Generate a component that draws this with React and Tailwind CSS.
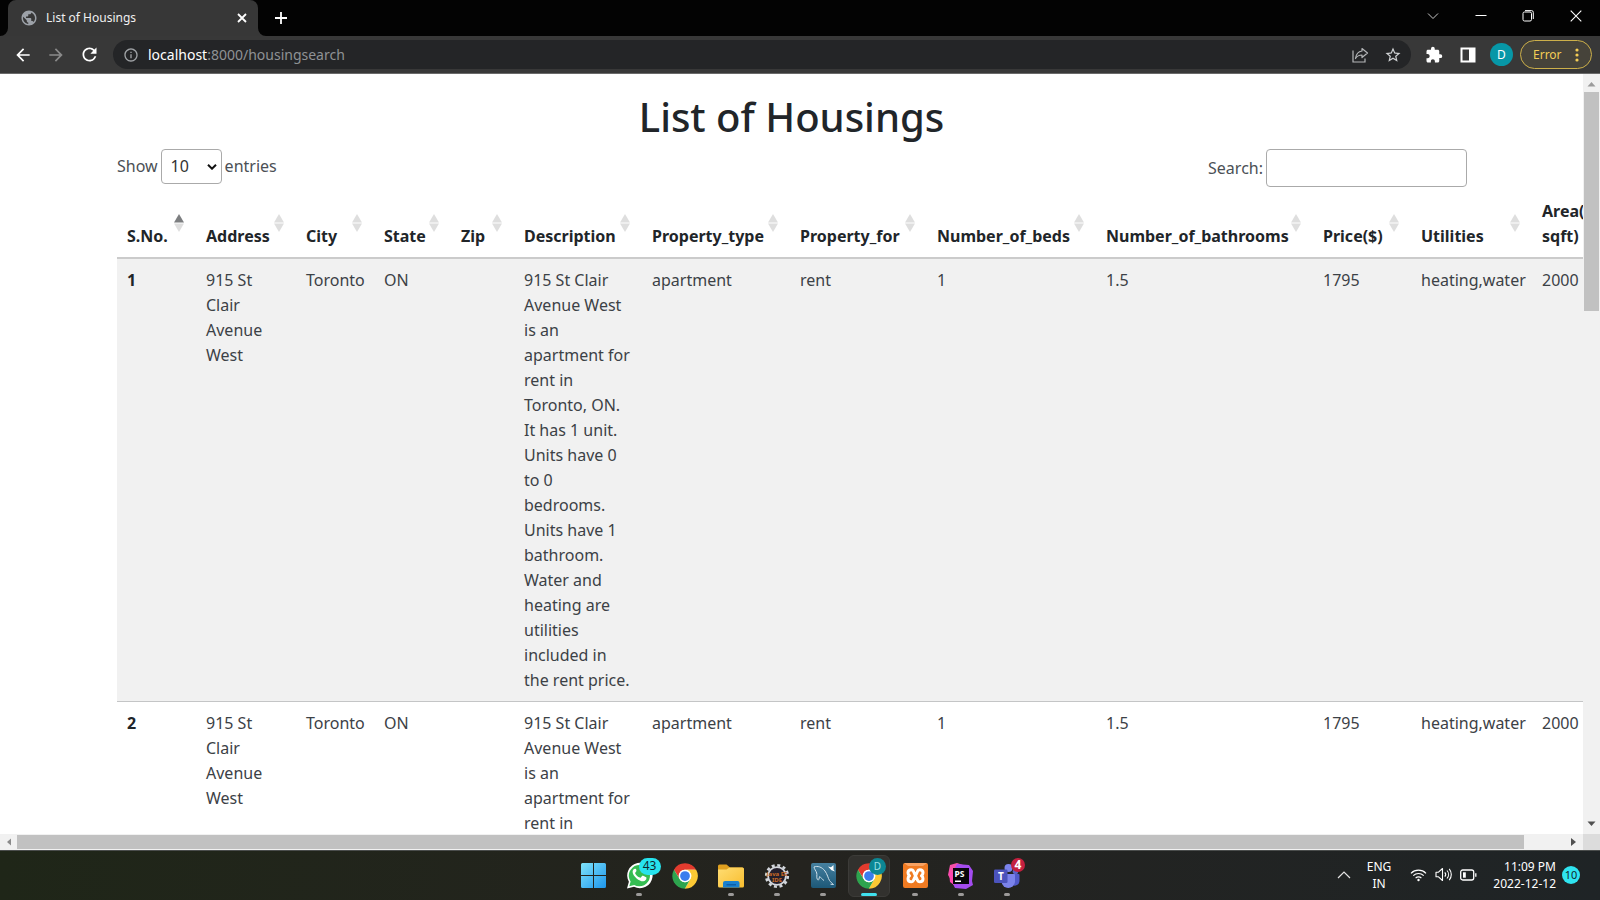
import React from "react";
import {
  MdArrowBack,
  MdArrowForward,
  MdRefresh,
  MdInfoOutline,
  MdExtension,
  MdStarOutline,
  MdPublic,
} from "react-icons/md";

const columns = [
  { label: "S.No.", width: "w-[79px]", sort: "asc" },
  { label: "Address", width: "w-[100px]" },
  { label: "City", width: "w-[78px]" },
  { label: "State", width: "w-[77px]" },
  { label: "Zip", width: "w-[63px]" },
  { label: "Description", width: "w-[128px]" },
  { label: "Property_type", width: "w-[148px]" },
  { label: "Property_for", width: "w-[137px]" },
  { label: "Number_of_beds", width: "w-[169px]" },
  { label: "Number_of_bathrooms", width: "w-[217px]" },
  { label: "Price($)", width: "w-[98px]" },
  { label: "Utilities", width: "w-[121px]" },
  { label: "Area(\nsqft)", width: "w-[100px]" },
];

const description =
  "915 St Clair\nAvenue West\nis an\napartment for\nrent in\nToronto, ON.\nIt has 1 unit.\nUnits have 0\nto 0\nbedrooms.\nUnits have 1\nbathroom.\nWater and\nheating are\nutilities\nincluded in\nthe rent price.";

const address = "915 St\nClair\nAvenue\nWest";

const rows = ["1", "2"].map((id) => ({
  id,
  cells: [address, "Toronto", "ON", "", description, "apartment", "rent", "1", "1.5", "1795", "heating,water", "2000"],
}));

function TabStrip() {
  return (
    <div className="flex h-9 shrink-0 items-stretch bg-[#030303] pl-2 text-white">
      <div className="relative flex w-[250px] items-center rounded-t-lg bg-[#373737] pl-3 pr-2">
        <svg className="absolute bottom-0 -left-2 size-2" viewBox="0 0 8 8" aria-hidden="true">
          <path d="M8 0v8H0A8 8 0 0 0 8 0z" fill="#373737" />
        </svg>
        <svg className="absolute bottom-0 -right-2 size-2" viewBox="0 0 8 8" aria-hidden="true">
          <path d="M0 0v8h8A8 8 0 0 1 0 0z" fill="#373737" />
        </svg>
        <MdPublic className="size-[18px] text-[#9ca1a8]" />
        <span className="ml-2 grow text-xs text-[#f0f0f0]">List of Housings</span>
        <button aria-label="Close tab" className="grid size-4 place-items-center">
          <svg className="size-[10px]" viewBox="0 0 10 10" stroke="#fff" strokeWidth="1.8" aria-hidden="true">
            <path d="M1 1l8 8M9 1L1 9" />
          </svg>
        </button>
      </div>
      <button aria-label="New tab" className="ml-[9px] grid w-7 place-items-center">
        <svg className="size-3" viewBox="0 0 12 12" stroke="#fff" strokeWidth="1.8" aria-hidden="true">
          <path d="M6 0v12M0 6h12" />
        </svg>
      </button>
      <div className="ml-auto flex pb-[5px]">
        <button aria-label="Search tabs" className="grid w-12 place-items-center">
          <svg className="size-3" viewBox="0 0 12 12" fill="none" stroke="#c8c8c8" aria-hidden="true">
            <path d="M1 3.5l5 5 5-5" />
          </svg>
        </button>
        <button aria-label="Minimize" className="grid w-[47px] place-items-center">
          <svg className="size-3" viewBox="0 0 12 12" stroke="#fff" aria-hidden="true">
            <path d="M.5 5.5h11" />
          </svg>
        </button>
        <button aria-label="Restore" className="grid w-[47px] place-items-center">
          <svg className="size-3" viewBox="0 0 12 12" fill="none" stroke="#fff" aria-hidden="true">
            <rect x="1" y="2" width="8.5" height="9" rx="1.5" />
            <path d="M3 .6h6.5a1.8 1.8 0 0 1 1.8 1.8V9" />
          </svg>
        </button>
        <button aria-label="Close" className="grid w-[49px] place-items-center">
          <svg className="size-3" viewBox="0 0 12 12" stroke="#fff" strokeWidth="1.1" aria-hidden="true">
            <path d="M.7.7l10.6 10.6M11.3.7L.7 11.3" />
          </svg>
        </button>
      </div>
    </div>
  );
}

function Toolbar() {
  const [url, setUrl] = React.useState("localhost:8000/housingsearch");
  const host = url.split(/[:/]/)[0];
  return (
    <div className="flex h-[38px] shrink-0 items-center border-b border-[#6a6a6a] bg-[#383838] pr-2 pl-[13px] text-white">
      <button aria-label="Back">
        <MdArrowBack className="size-5" />
      </button>
      <button aria-label="Forward" className="ml-[13px]">
        <MdArrowForward className="size-5 text-[#8a8a8a]" />
      </button>
      <button aria-label="Reload" className="ml-[13px]">
        <MdRefresh className="size-[21px]" />
      </button>
      <div className="ml-[13px] flex h-[29px] grow items-center rounded-full bg-[#242527] pr-[9px] pl-2">
        <MdInfoOutline className="mx-0.5 size-4 shrink-0 text-[#a0a3a6]" />
        <div className="ml-[7px] grid grow text-sm">
          <span aria-hidden="true" className="col-start-1 row-start-1 text-[#8f9295]">
            <span className="text-white">{host}</span>
            {url.slice(host.length)}
          </span>
          <input
            aria-label="Address"
            className="col-start-1 row-start-1 bg-transparent text-transparent caret-white outline-none"
            value={url}
            onChange={(e) => setUrl(e.target.value)}
          />
        </div>
        <button aria-label="Share">
          <svg className="size-[18px]" viewBox="0 0 18 18" fill="none" stroke="#b4b6b8" strokeWidth="1.2" aria-hidden="true">
            <path d="M2 4.500V16h12v-3.500" />
            <path d="M11 2.500l5.500 4.500-5.500 4.500V9C8 9 6 10 4.500 12.500 5 8.500 7 5.500 11 5z" strokeLinejoin="round" />
          </svg>
        </button>
        <button aria-label="Bookmark" className="ml-[15px]">
          <MdStarOutline className="size-[18px] text-[#d0d2d4]" />
        </button>
      </div>
      <button aria-label="Extensions" className="ml-3.5">
        <MdExtension className="size-[18px]" />
      </button>
      <button aria-label="Side panel" className="ml-[17px]">
        <svg className="size-4" viewBox="0 0 16 16" aria-hidden="true">
          <path fill="#fff" fillRule="evenodd" d="M.5.5h15v15H.5zM2.500 2.500v11h6.500v-11z" />
        </svg>
      </button>
      <button aria-label="Profile" className="ml-3.5 grid size-[23px] place-items-center rounded-full bg-[#0797a7] text-xs">
        D
      </button>
      <button className="ml-[7px] flex h-[29px] w-[72px] items-center justify-between rounded-full border border-[#cdb04a] bg-[#46433a] px-3 text-xs text-[#f5cd55]">
        Error
        <svg className="h-3.5 w-1" viewBox="0 0 4 14" fill="#f5cd55" aria-hidden="true">
          <circle cx="2" cy="2" r="1.600" />
          <circle cx="2" cy="7" r="1.600" />
          <circle cx="2" cy="12" r="1.600" />
        </svg>
      </button>
    </div>
  );
}

function SortIcon({ active }) {
  return (
    <svg className="absolute top-[23px] right-3 h-[18px] w-[10px]" viewBox="0 0 10 18" aria-hidden="true">
      <path d="M5 0l5 8.500H0z" fill={active ? "#7c7e80" : "#dedede"} />
      <path d="M5 18l5-8.500H0z" fill="#dedede" />
    </svg>
  );
}

function HousingTable() {
  return (
    <table className="mt-1 w-[1515px] table-fixed border-collapse text-left">
      <thead>
        <tr className="border-b-2 border-[#cbcbcb]">
          {columns.map((c) => (
            <th key={c.label} scope="col" className={`relative px-2.5 py-2 align-bottom font-bold whitespace-pre ${c.width}`}>
              {c.label}
              <SortIcon active={c.sort === "asc"} />
            </th>
          ))}
        </tr>
      </thead>
      <tbody>
        {rows.map((r) => (
          <tr key={r.id} className="border-b border-[#c4c5c6] odd:bg-[#f1f1f1]">
            <th scope="row" className="px-2.5 pt-[9px] pb-2 align-top font-bold">
              {r.id}
            </th>
            {r.cells.map((text, i) => (
              <td key={i} className="px-2.5 pt-[9px] pb-2 align-top whitespace-pre text-[#3c4146]">
                {text}
              </td>
            ))}
          </tr>
        ))}
      </tbody>
    </table>
  );
}

function Page() {
  return (
    <main className="min-w-0 grow overflow-hidden bg-white pl-[117px] text-base/[25px] text-[#212529]">
      <div className="-ml-[117px] pt-[18px] text-center">
        <h1 className="text-[40px]/[50px] font-medium">List of Housings</h1>
      </div>
      <div className="mt-[7px] mr-[116px] flex items-start justify-between text-[#4b5055]">
        <label className="flex items-center gap-[3px]">
          Show
          <span className="relative">
            <select defaultValue="10" className="h-[35px] w-[61px] appearance-none rounded border border-[#aaa] bg-white pl-[9px] text-[#333]">
              <option>10</option>
              <option>25</option>
              <option>50</option>
              <option>100</option>
            </select>
            <svg className="pointer-events-none absolute top-[15px] right-[5px] h-1.5 w-2.5" viewBox="0 0 10 6" fill="none" stroke="#111" strokeWidth="2" aria-hidden="true">
              <path d="M1 .7l4 4 4-4" />
            </svg>
          </span>
          entries
        </label>
        <label className="flex items-center gap-[3px]">
          Search:
          <input type="search" className="h-[38px] w-[201px] rounded border border-[#aaa] bg-white px-1" />
        </label>
      </div>
      <HousingTable />
    </main>
  );
}

function VerticalScrollbar() {
  return (
    <div className="flex w-[17px] shrink-0 flex-col items-center bg-[#f1f1f1]">
      <svg className="h-[18px] w-[17px]" viewBox="0 0 17 18" aria-hidden="true">
        <path d="M4.500 12.500h8l-4-4.500z" fill="#9b9b9b" />
      </svg>
      <div className="h-[219px] w-[15px] bg-[#c1c1c1]" />
      <svg className="mt-auto h-[17px] w-[17px]" viewBox="0 0 17 17" aria-hidden="true">
        <path d="M4.500 4.500h8l-4 4.500z" fill="#505050" />
      </svg>
    </div>
  );
}

function HorizontalScrollbar() {
  return (
    <div className="flex h-4 shrink-0 items-center bg-[#f1f1f1]">
      <svg className="h-4 w-[17px] shrink-0" viewBox="0 0 17 16" aria-hidden="true">
        <path d="M11 4.500v7L7 8z" fill="#8b8b8b" />
      </svg>
      <div className="h-[14px] grow bg-[#c1c1c1]" />
      <svg className="ml-[41px] h-4 w-[18px] shrink-0" viewBox="0 0 18 16" aria-hidden="true">
        <path d="M6 4v8l5-4z" fill="#505050" />
      </svg>
      <div className="h-full w-[17px] shrink-0 bg-[#dcdcdc]" />
    </div>
  );
}

function ChromeLogo() {
  return (
    <svg className="size-[26px]" viewBox="0 0 48 48" aria-hidden="true">
      <circle cx="24" cy="24" r="22" fill="#fff" />
      <path d="M24 12.500h20.600A23.500 23.500 0 0 0 3.650 12.250L14.040 29.750A11.500 11.500 0 0 1 24 12.500z" fill="#e23b2e" />
      <path d="M33.960 29.750L23.700 47.500A23.500 23.500 0 0 0 44.600 12.500H24a11.500 11.500 0 0 1 9.960 17.250z" fill="#fcc934" />
      <path d="M14.040 29.750L3.650 12.250A23.500 23.500 0 0 0 23.700 47.500L33.960 29.750a11.500 11.500 0 0 1-19.920 0z" fill="#2da44e" />
      <circle cx="24" cy="24" r="11.500" fill="#fff" />
      <circle cx="24" cy="24" r="9" fill="#3b7ded" />
    </svg>
  );
}

function WindowsLogo() {
  return (
    <svg className="size-[25px]" viewBox="0 0 25 25" aria-hidden="true">
      <defs>
        <linearGradient id="win" x1="0" y1="0" x2="1" y2="1" gradientUnits="objectBoundingBox">
          <stop offset="0" stopColor="#7fe3fb" />
          <stop offset="1" stopColor="#1d96ec" />
        </linearGradient>
      </defs>
      <path fill="url(#win)" d="M1.500 0H12v12H0V1.500Q0 0 1.500 0zM13 0h10.500Q25 0 25 1.500V12H13zM0 13h12v12H1.500Q0 25 0 23.500zM13 13h12v10.500q0 1.500-1.500 1.500H13z" />
    </svg>
  );
}

function WhatsAppLogo() {
  return (
    <svg className="size-[27px]" viewBox="0 0 27 27" aria-hidden="true">
      <path d="M1 26.500l1.900-6.700A12.700 12.700 0 1 1 8 24.700z" fill="#fff" />
      <path d="M3.300 24.200l1.300-4.600A10.600 10.600 0 1 1 8.200 22.900z" fill="#35bd52" />
      <path d="M10.200 7.500c-.4-.8-.8-.8-1.300-.8-.8 0-2.300 1-2.300 3 0 2.200 1.700 4.700 4 6.700 2.400 2 5 3 6.700 2.800 1.600-.2 3-1.500 3.100-2.800.1-.7 0-.9-.3-1.100l-3-1.500c-.5-.2-.8-.1-1.100.3l-1.100 1.400c-.3.300-.6.300-1 .100-2-.8-3.900-2.600-4.700-4.200-.2-.4-.1-.6.200-1l.9-1.100c.2-.3.200-.6.100-.9z" fill="#fff" />
    </svg>
  );
}

function FolderLogo() {
  return (
    <svg className="h-[24px] w-[26px]" viewBox="0 0 26 24" aria-hidden="true">
      <defs>
        <linearGradient id="folder" x1="0" y1="0" x2="1" y2="1">
          <stop offset="0" stopColor="#ffdd73" />
          <stop offset="1" stopColor="#f8bd2e" />
        </linearGradient>
      </defs>
      <path d="M0 2a1.500 1.500 0 0 1 1.500-1.500h7L12 3.500h12.500L26 5v9H0z" fill="#e0a01f" />
      <path d="M0 5.500h8.500l3-2h13Q26 3.500 26 5v17q0 1.500-1.500 1.500h-23Q0 23.500 0 22z" fill="url(#folder)" />
      <path d="M5 23.500V19q0-2 2-2h12.500q2 0 2 2v4.500z" fill="#1980cf" />
      <path d="M8.500 20h9.500v1.500H8.500z" fill="#0d5fa8" />
    </svg>
  );
}

function GearLogo() {
  return (
    <svg className="size-[26px]" viewBox="0 0 26 26" aria-hidden="true">
      <circle cx="13" cy="13" r="10.800" fill="none" stroke="#d3d6dc" strokeWidth="2.600" strokeDasharray="3 2.650" />
      <circle cx="13" cy="13" r="8.900" fill="#241f2b" stroke="#d3d6dc" strokeWidth="1.800" />
      <text x="13" y="12.500" textAnchor="middle" fontSize="6" fontWeight="700" fill="#c96a26">Java EE</text>
      <text x="13" y="18.500" textAnchor="middle" fontSize="6" fontWeight="700" fill="#c96a26">IDE</text>
    </svg>
  );
}

function MySqlLogo() {
  return (
    <svg className="size-[25px]" viewBox="0 0 25 25" aria-hidden="true">
      <defs>
        <linearGradient id="sql" x1="0" y1="0" x2="0" y2="1">
          <stop offset="0" stopColor="#46809f" />
          <stop offset="1" stopColor="#1d5878" />
        </linearGradient>
      </defs>
      <rect width="25" height="25" rx="2" fill="url(#sql)" />
      <path d="M3 4c3.500-1.500 8 0 11 4 2.500 3.500 3 7 4.500 9.500.8 1.500 2.500 2.300 4 4l-3-.3M3 4c.3 2.300 2 3.500 2.700 6 .6 2.200-.5 4 .6 6.300.5 1 1.300.8 1.600 0 .3-.9.2-1.800.8-2.800 1.300 1.200 2.300 2.700 4.300 4" fill="none" stroke="#cfdfe8" strokeWidth="1" />
      <path d="M17 3.500l3 .7L22.500 2v4.500L24 8.500l-3.500-1.300z" fill="#fff" />
    </svg>
  );
}

function XamppLogo() {
  return (
    <svg className="size-[25px]" viewBox="0 0 25 25" aria-hidden="true">
      <rect width="25" height="25" rx="2" fill="#f07b22" />
      <path d="M1 0h23l-4 3H5z" fill="#f8a262" />
      <path
        d="M12.500 12.800L10.300 8Q9.700 6.800 8.300 6.800 5 6.800 5 9.800q0 2 1.500 3-1.500 1-1.500 3 0 3 3.300 3 1.400 0 2-1.200zM12.500 12.800L14.700 8Q15.300 6.800 16.700 6.800 20 6.800 20 9.800q0 2-1.500 3 1.500 1 1.500 3 0 3-3.300 3-1.400 0-2-1.200z"
        fill="none"
        stroke="#fff"
        strokeWidth="3"
        strokeLinejoin="round"
      />
    </svg>
  );
}

function PhpStormLogo() {
  return (
    <svg className="size-[26px]" viewBox="0 0 26 26" aria-hidden="true">
      <path d="M2 2l7-2 9 3-4 18-8 1-6-10z" fill="#f64fa8" />
      <path d="M9 1l12 1 4 6-1 10 1 4-7 4-11-1-3-6 2-12z" fill="#a44cf0" />
      <path d="M1 9l5 1v12l-4-3z" fill="#ff45b0" />
      <rect x="5" y="5" width="16" height="16" fill="#08060c" />
      <text x="6.500" y="13.500" fontSize="8.500" fontWeight="700" fill="#fff">PS</text>
      <path d="M7 17.500h6V19H7z" fill="#fff" />
    </svg>
  );
}

function TeamsLogo() {
  return (
    <svg className="size-[26px]" viewBox="0 0 26 26" aria-hidden="true">
      <circle cx="21.500" cy="8.500" r="2.800" fill="#5a62c8" />
      <circle cx="14.500" cy="5" r="4" fill="#7b83eb" />
      <path d="M18 11h6.500q1 0 1 1v6a5 5 0 0 1-7.500 4z" fill="#5059c9" />
      <path d="M7.500 11H20q1 0 1 1v7a6.800 6.800 0 0 1-13.500 0z" fill="#7b83eb" />
      <rect x="0" y="6.500" width="13.500" height="13.500" rx="1.200" fill="#4b53bc" />
      <text x="6.800" y="17" textAnchor="middle" fontSize="10" fontWeight="700" fill="#fff">T</text>
    </svg>
  );
}

const apps = [
  { name: "Start", Logo: WindowsLogo, running: false },
  { name: "WhatsApp", Logo: WhatsAppLogo, running: true, badge: "43", badgeStyle: "-top-1 -right-2 h-[17px] w-[22px] bg-[#27e3ee] text-[#10282c] text-xs" },
  { name: "Chrome", Logo: ChromeLogo, running: false },
  { name: "File Explorer", Logo: FolderLogo, running: true },
  { name: "Eclipse", Logo: GearLogo, running: true },
  { name: "MySQL Workbench", Logo: MySqlLogo, running: true },
  { name: "Chrome profile", Logo: ChromeLogo, running: true, active: true, badge: "D", badgeStyle: "-top-1 -right-1 size-[17px] bg-[#0c8794] text-[#9fe0e6] text-[10px]" },
  { name: "XAMPP", Logo: XamppLogo, running: true },
  { name: "PhpStorm", Logo: PhpStormLogo, running: true },
  { name: "Teams", Logo: TeamsLogo, running: true, badge: "4", badgeStyle: "-top-1 -right-[5px] size-[14px] bg-[#c4203f] text-white text-xs font-bold" },
];

function TaskbarApp({ app }) {
  const { Logo } = app;
  return (
    <button
      aria-label={app.name}
      className={`flex h-[42px] w-[42px] flex-col items-center justify-end rounded-md border ${app.active ? "border-[#3c3b38] bg-[#32312e]" : "border-transparent"}`}
    >
      <span className="relative mb-[3px] grid h-7 place-items-center">
        <Logo />
        {app.badge && (
          <span className={`absolute grid place-items-center rounded-full leading-none ${app.badgeStyle}`}>{app.badge}</span>
        )}
      </span>
      <span className={`h-[3px] rounded-full ${app.active ? "w-4 bg-[#40e0ee]" : app.running ? "w-1.5 bg-[#9c9a99]" : "w-1.5"}`} />
    </button>
  );
}

function Tray() {
  return (
    <div className="flex items-center justify-end pr-5 pb-0.5 text-xs/[17px] text-white">
      <button aria-label="Show hidden icons">
        <svg className="h-2 w-3.5" viewBox="0 0 14 8" fill="none" stroke="#e4e4e4" strokeWidth="1.200" aria-hidden="true">
          <path d="M1 7l6-6 6 6" />
        </svg>
      </button>
      <button className="ml-4 text-center">
        ENG
        <br />
        IN
      </button>
      <button aria-label="Network, volume and battery" className="ml-[19px] flex items-center gap-2">
        <svg className="h-[14px] w-[17px]" viewBox="0 0 17 14" fill="none" stroke="#fff" strokeWidth="1.200" aria-hidden="true">
          <path d="M1 5.300a10.600 10.600 0 0 1 15 0M3.300 7.700a7.300 7.300 0 0 1 10.400 0M5.600 10.100a4.100 4.100 0 0 1 5.800 0" />
          <circle cx="8.500" cy="12" r="1.200" fill="#fff" stroke="none" />
        </svg>
        <svg className="h-[15px] w-[17px]" viewBox="0 0 17 15" fill="none" stroke="#fff" strokeWidth="1.100" aria-hidden="true">
          <path d="M1 5.200h2.500L7.500 1.500v12L3.500 9.800H1z" strokeLinejoin="round" />
          <path d="M9.800 5.300a3.400 3.400 0 0 1 0 4.400M12 3.500a6 6 0 0 1 0 8M14.200 1.800a8.800 8.800 0 0 1 0 11.400" />
        </svg>
        <svg className="h-3 w-[17px]" viewBox="0 0 17 12" fill="none" stroke="#fff" strokeWidth="1.300" aria-hidden="true">
          <rect x=".7" y="1" width="13" height="10" rx="2" />
          <path d="M3 3.300h2.800v5.400H3z" fill="#fff" stroke="none" />
          <path d="M15.800 4.300v3.400" />
        </svg>
      </button>
      <button className="ml-4 text-right">
        11:09 PM
        <br />
        2022-12-12
      </button>
      <span className="ml-1.5 grid size-[18px] place-items-center rounded-full bg-[#2fe4f0] text-[11px] leading-none text-[#10282c]">10</span>
    </div>
  );
}

export default function App() {
  return (
    <div className="flex h-screen flex-col overflow-hidden font-['Noto_Sans',sans-serif]">
      <header>
        <TabStrip />
        <Toolbar />
      </header>
      <div className="flex min-h-0 grow">
        <Page />
        <VerticalScrollbar />
      </div>
      <HorizontalScrollbar />
      <footer className="grid h-[50px] shrink-0 grid-cols-[1fr_auto_1fr] border-t border-[#4a4d4c] bg-linear-to-r from-[#1f2618] via-[#24231f] to-[#1f2426]">
        <div />
        <nav aria-label="Taskbar" className="flex items-center gap-1">
          {apps.map((app) => (
            <TaskbarApp key={app.name} app={app} />
          ))}
        </nav>
        <Tray />
      </footer>
    </div>
  );
}
